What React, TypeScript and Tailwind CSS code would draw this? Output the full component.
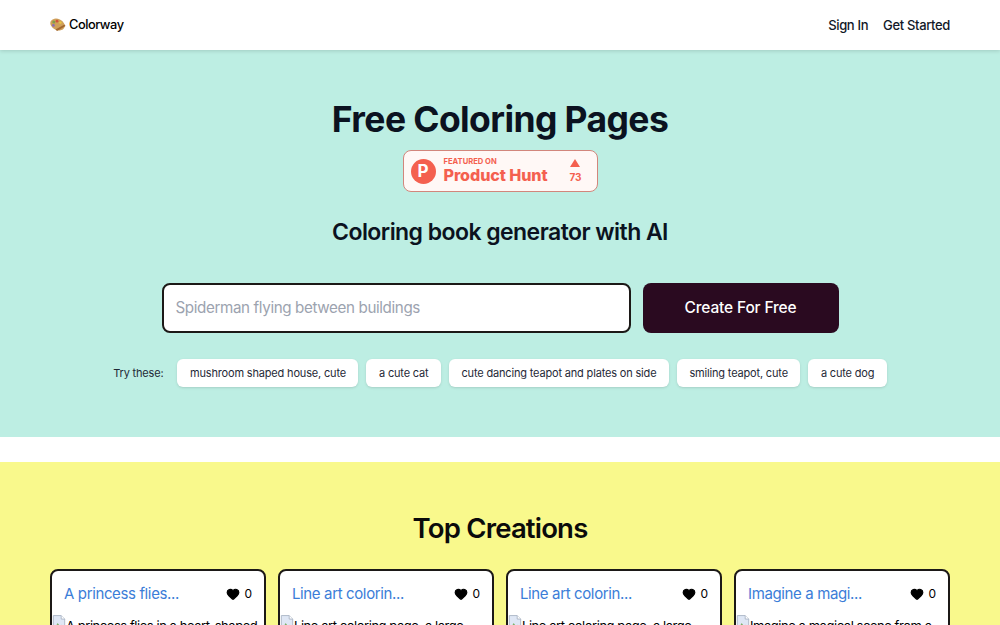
import React from "react";
import { Heart } from "lucide-react";

const suggestions = [
  "mushroom shaped house, cute",
  "a cute cat",
  "cute dancing teapot and plates on side",
  "smiling teapot, cute",
  "a cute dog",
];

const cards = [
  { title: "A princess flies...", alt: "A princess flies in a heart-shaped balloon over the clouds" },
  { title: "Line art colorin...", alt: "Line art coloring page, a large castle on a quiet green hill" },
  { title: "Line art colorin...", alt: "Line art coloring page, a large dragon sleeping in the cave" },
  { title: "Imagine a magi...", alt: "Imagine a magical scene from a fairy tale with tiny houses" },
];

const Palette = () => (
  <svg width="16" height="16" viewBox="0 0 16 16">
    <ellipse cx="7.5" cy="7.5" rx="7.5" ry="5.6" transform="rotate(25 7.5 7.5)" fill="#cfa05a" />
    <circle cx="3.8" cy="5" r="1.5" fill="#7f9f4a" />
    <circle cx="7" cy="4.2" r="1.4" fill="#d0523c" />
    <circle cx="3.4" cy="8.4" r="1.4" fill="#8a6db5" />
    <circle cx="10.4" cy="5.6" r="1.2" fill="#e9c83f" />
    <path d="M5.5 12.5 L14.5 7.5 L15.5 9 L7 14 Z" fill="#a2672f" />
  </svg>
);

const BrokenImage = () => (
  <svg width="14" height="16" viewBox="0 0 16 18" className="inline-block align-top -mt-px">
    <path d="M1.5 0.5 H10.5 L14.5 4.5 V17.5 H1.5 Z" fill="#dfe7f5" stroke="#a9b4c4" />
    <path d="M10.5 0.5 V4.5 H14.5" fill="#fff" stroke="#a9b4c4" />
    <path d="M3 15 L6.5 9 L9 12.5 L11 11 L13 15 Z" fill="#7fb069" />
  </svg>
);

const ProductHuntBadge = () => (
  <div className="w-[195px] h-[42px] rounded-lg border border-[#d2867c] bg-[#fff8f6] flex items-center pl-[7px] pr-[15px] font-['Inter',sans-serif] text-[#f4604f]">
    <div className="w-[25px] h-[25px] rounded-full bg-[#f4604f] flex items-center justify-center text-white text-[17px] font-bold leading-none">
      P
    </div>
    <div className="ml-2 flex flex-col flex-1">
      <span className="text-[7.6px] font-bold leading-[8px] whitespace-nowrap">FEATURED ON</span>
      <span className="text-[16.1px] font-extrabold leading-[19px] tracking-[-0.1px] whitespace-nowrap">Product Hunt</span>
    </div>
    <div className="flex flex-col items-center">
      <div className="w-0 h-0 border-x-[5px] border-x-transparent border-b-[8px] border-b-[#f4604f]" />
      <span className="text-[10px] font-bold leading-[12px] mt-1">73</span>
    </div>
  </div>
);

const Card = ({ title, alt }: { title: string; alt: string }) => (
  <div className="bg-white border-2 border-[#1c1917] rounded-lg h-[200px] overflow-hidden">
    <div className="flex items-center justify-between pl-3 pr-3 pt-[11px]">
      <span className="text-[#3b7dd8] text-[15px] tracking-[-0.37px] leading-6">{title}</span>
      <div className="flex items-center gap-1 text-black text-xs">
        <Heart size={14} fill="black" strokeWidth={2} />
        <span>0</span>
      </div>
    </div>
    <div className="mt-[10px] text-[13px] tracking-[-0.45px] leading-5 text-black">
      <BrokenImage />
      <span>{alt}</span>
    </div>
  </div>
);

export default function App() {
  return (
    <div className="h-screen overflow-hidden bg-white font-['Inter',sans-serif] text-[#0f172a]">
      <header className="h-[50px] bg-white shadow-[0_1px_4px_rgba(0,0,0,0.15)] relative flex items-center justify-between px-[50px]">
        <div className="flex items-center gap-[3px] text-[12.8px] tracking-[-0.45px] font-medium text-black">
          <Palette />
          <span>Colorway</span>
        </div>
        <nav className="flex items-center gap-[15px] pt-px text-[13px] tracking-[-0.35px] font-medium text-[#111827]">
          <span>Sign In</span>
          <span>Get Started</span>
        </nav>
      </header>

      <section className="h-[387px] bg-[#bdeee3] flex flex-col items-center pt-[46px]">
        <h1 className="text-[35.5px] tracking-[-0.6px] leading-[48px] font-bold text-[#0b1220]">Free Coloring Pages</h1>
        <div className="mt-[6px]">
          <ProductHuntBadge />
        </div>
        <h2 className="mt-6 text-[23px] tracking-[-0.55px] leading-8 font-semibold text-[#0b1220]">Coloring book generator with AI</h2>
        <div className="mt-[35px] flex gap-3">
          <div className="w-[469px] h-[50px] bg-white border-2 border-[#1c1917] rounded-lg flex items-center px-3 text-[15.2px] tracking-[-0.38px] text-[#9ca3af]">
            Spiderman flying between buildings
          </div>
          <button className="w-[196px] h-[50px] bg-[#2a0a20] text-white rounded-lg text-[15.5px] tracking-[-0.15px] font-medium">
            Create For Free
          </button>
        </div>
        <div className="mt-[26px] flex items-center gap-2 text-[11px] tracking-[-0.17px] text-[#1f2937]">
          <span className="mr-1.5">Try these:</span>
          {suggestions.map((s) => (
            <span key={s} className="h-7 px-[12.5px] flex items-center bg-white rounded-md shadow-sm">
              {s}
            </span>
          ))}
        </div>
      </section>

      <section className="mt-[25px] bg-[#f9f98c] px-[50px] pt-[48px] pb-10">
        <h2 className="text-center text-[27.5px] tracking-[-0.8px] leading-9 font-semibold text-[#0b0b0b]">Top Creations</h2>
        <div className="mt-[23px] grid grid-cols-4 gap-3">
          {cards.map((c) => (
            <Card key={c.alt} title={c.title} alt={c.alt} />
          ))}
        </div>
      </section>
    </div>
  );
}
